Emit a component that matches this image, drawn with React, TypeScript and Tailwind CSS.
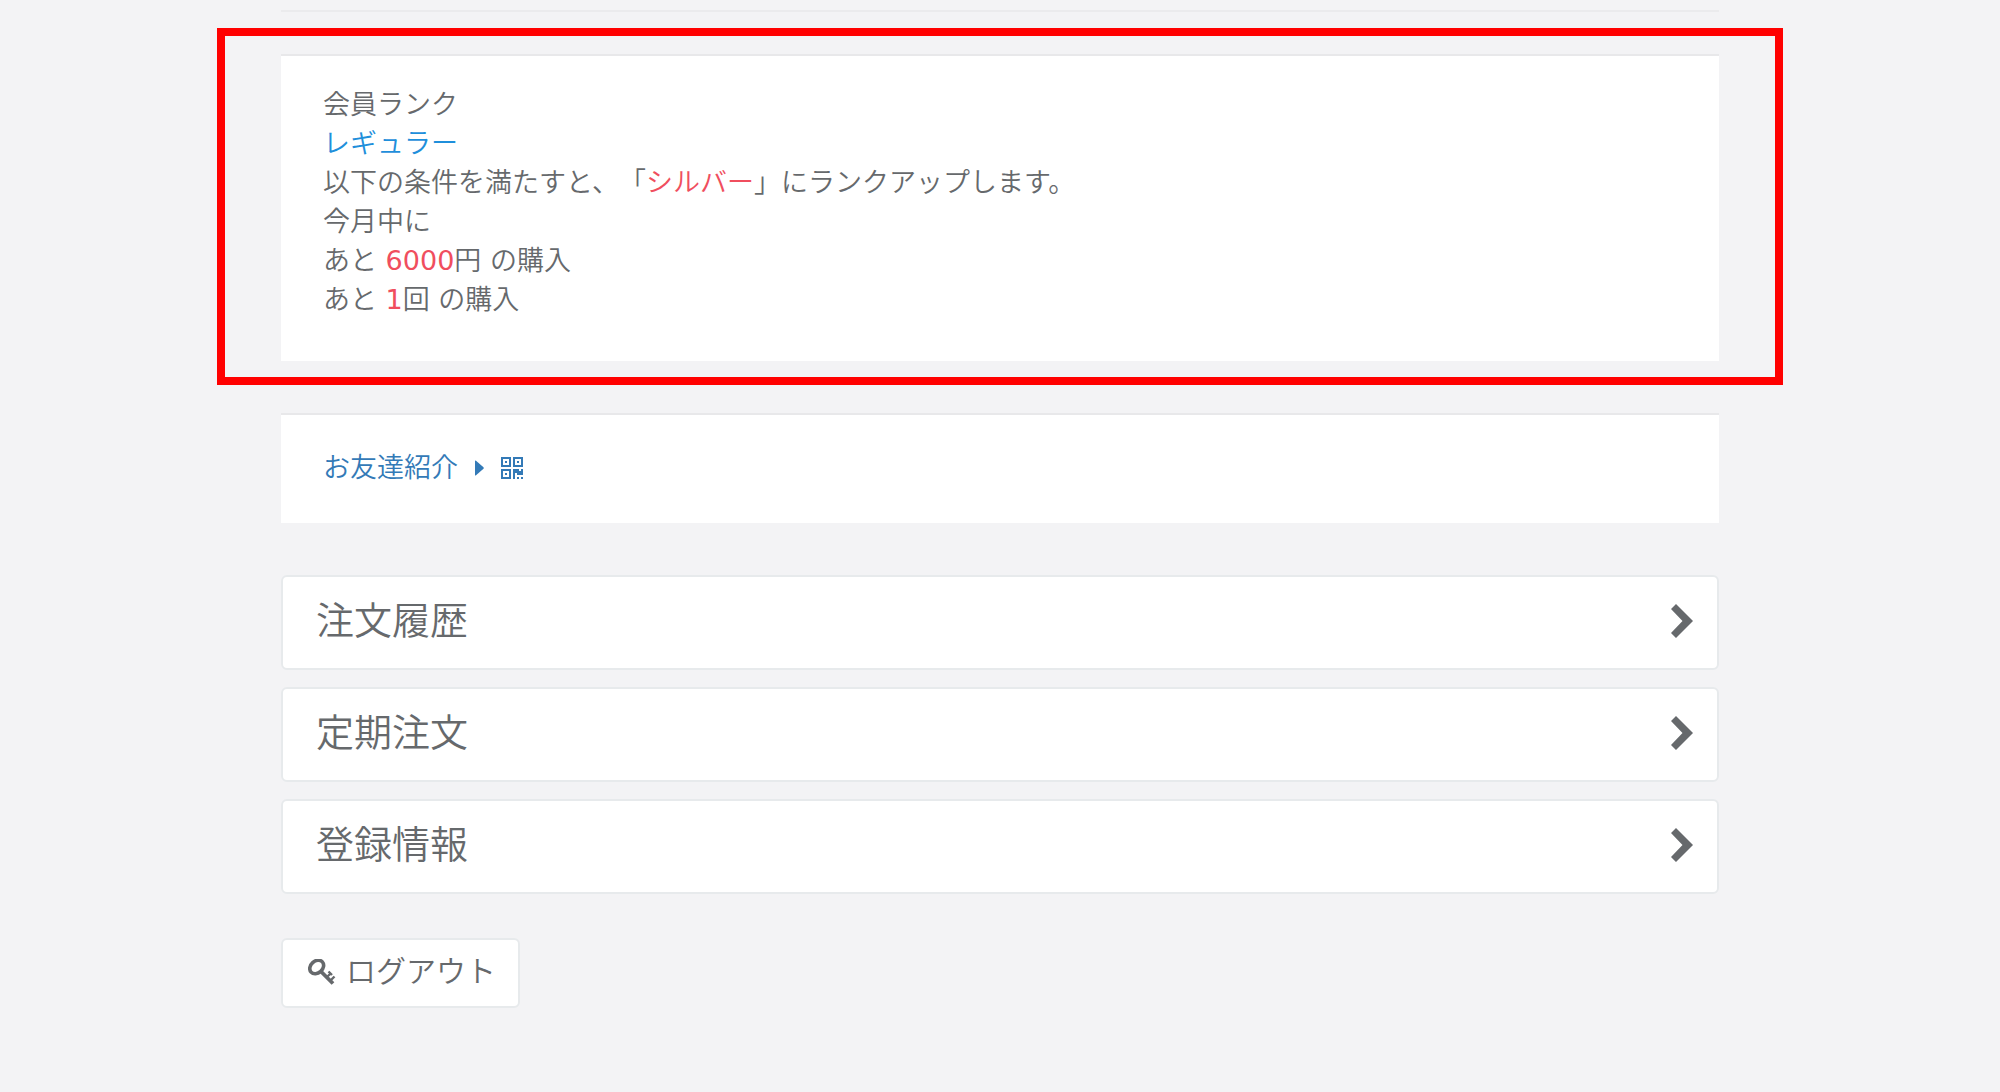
import type { ReactNode } from "react"

const menuItems = [
    { label: "注文履歴", href: "#orders" },
    { label: "定期注文", href: "#subscriptions" },
    { label: "登録情報", href: "#profile" },
]

function CaretRightIcon() {
    return (
        <svg className="h-4 w-[9px]" viewBox="0 0 9 16" fill="currentColor" aria-hidden="true">
            <path d="M0 1Q0 0 1 .7L8.500 7.300Q9 8 8.500 8.700L1 15.300Q0 16 0 15Z" />
        </svg>
    )
}

function QrIcon() {
    return (
        <svg className="size-[22px]" viewBox="0 0 11 11" fill="currentColor" aria-hidden="true">
            <path fillRule="evenodd" d="M0 0h5v5H0zM1 1v3h3V1zM6 0h5v5H6zM7 1v3h3V1zM0 6h5v5H0zM1 7v3h3V7z" />
            <path d="M2 2h1v1H2zM8 2h1v1H8zM2 8h1v1H2zM8 10h1v1H8zM10 10h1v1h-1z" />
            <path d="M11 6v3H8V8H7v3H6V6h3v1h1V6z" />
        </svg>
    )
}

function ChevronIcon() {
    return (
        <svg className="h-[34px] w-[22px]" viewBox="0 0 22 34" fill="currentColor" aria-hidden="true">
            <path d="M5 0L22 17L5 34L0 29L11.500 17L0 5Z" />
        </svg>
    )
}

function KeyIcon() {
    return (
        <svg className="h-[26px] w-7" viewBox="0 0 28 26" fill="none" stroke="currentColor" aria-hidden="true">
            <ellipse cx="8.700" cy="8" rx="7.600" ry="6" strokeWidth="3.600" transform="rotate(-42 8.700 8)" />
            <path d="M12.500 12L25 24.500" strokeWidth="3.800" />
            <path d="M19 18L22.500 14.500M22.500 21.500L26.500 17.500M20.500 12.500L24 16" strokeWidth="2.400" />
        </svg>
    )
}

function Panel({ className, children }: { className: string; children: ReactNode }) {
    return (
        <section className={`relative border-t-2 border-[#e8e8ea] bg-white px-[42px] text-[27px] leading-[39px] ${className}`}>
            {children}
        </section>
    )
}

export default function App() {
    return (
        <div
            className="min-h-screen bg-[#f3f3f5] pt-[10px] pb-10 font-['DejaVu_Sans','Noto_Sans_CJK_JP',sans-serif] font-[350] text-[#66696c] [text-spacing-trim:space-all]"
            lang="ja"
        >
            <main className="mx-auto w-[72%] max-w-[1438px]">
                <hr className="mb-[42px] border-t-2 border-[#ebebed]" />

                <Panel className="pt-[29px] pb-[42px]">
                    <div className="pointer-events-none absolute -inset-x-16 -top-7 -bottom-6 border-8 border-[#ff0000]" />
                    <h2>会員ランク</h2>
                    <p className="text-[#1f8fdb]">レギュラー</p>
                    <p>
                        以下の条件を満たすと、「<span className="text-[#f04e5e]">シルバー</span>」にランクアップします。
                    </p>
                    <p>今月中に</p>
                    <p>
                        あと <span className="font-normal text-[#f04e5e]">6000</span>円 の購入
                    </p>
                    <p>
                        あと <span className="font-normal text-[#f04e5e]">1</span>回 の購入
                    </p>
                </Panel>

                <Panel className="mt-[52px] pt-[33px] pb-9">
                    <a href="#invite" className="flex w-fit items-center text-[#337ab7]">
                        <span className="mr-[17px]">お友達紹介</span>
                        <CaretRightIcon />
                        <span className="ml-[17px]">
                            <QrIcon />
                        </span>
                    </a>
                </Panel>

                <nav className="mt-[52px] flex flex-col gap-[17px]">
                    {menuItems.map((item) => (
                        <a
                            key={item.href}
                            href={item.href}
                            className="flex items-center justify-between rounded-md border-2 border-[#e7eaec] bg-white pt-[17px] pr-6 pb-5 pl-[33px] text-[38px] leading-[54px]"
                        >
                            {item.label}
                            <ChevronIcon />
                        </a>
                    ))}
                </nav>

                <button
                    type="button"
                    className="mt-11 flex items-center gap-2.5 rounded-md border-2 border-[#e7eaec] bg-white pt-2.5 pr-[22px] pb-[13px] pl-[25px] text-[30px] leading-[43px]"
                >
                    <KeyIcon />
                    ログアウト
                </button>
            </main>
        </div>
    )
}
